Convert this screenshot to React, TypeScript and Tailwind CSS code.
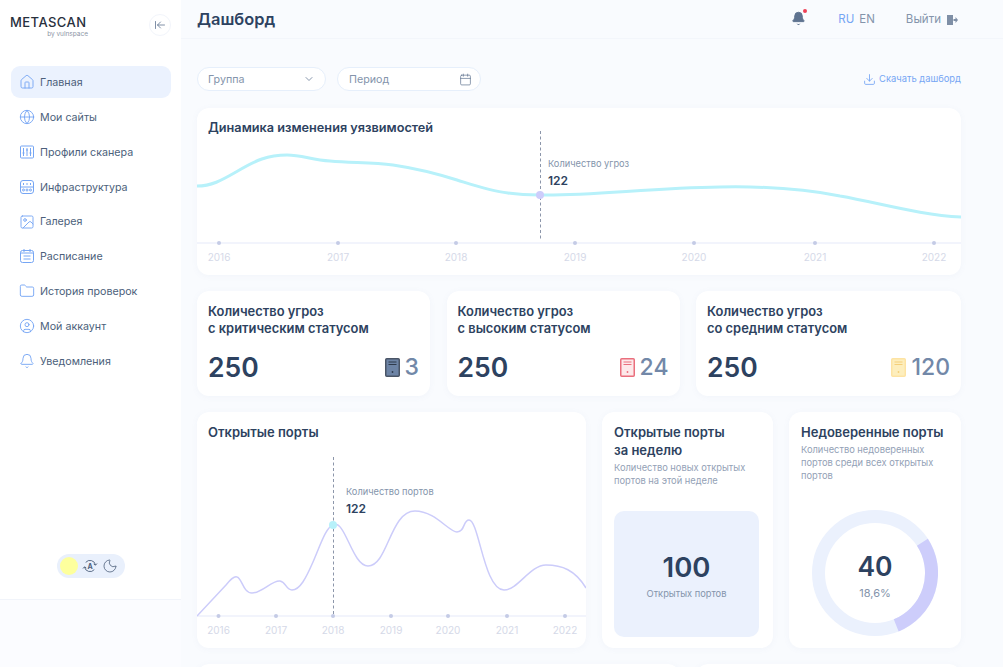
import React from 'react';
import {
  House,
  Globe,
  Image,
  Folder,
  CircleUser,
  Bell,
  Moon,
  ArrowLeftToLine,
  ChevronDown,
  Calendar,
  Download,
} from 'lucide-react';

const SlidersBox = (props: { className?: string }) => (
  <svg viewBox="0 0 16 16" fill="none" stroke="currentColor" strokeWidth="1" className={props.className}>
    <rect x="1.5" y="2" width="13" height="12" rx="1" />
    <path d="M4.5 4v8M8 4v8M11.5 4v8" />
    <path d="M3.5 9h2M7 6h2M10.5 9h2" strokeWidth="1.2" />
  </svg>
);

const InfraIcon = (props: { className?: string }) => (
  <svg viewBox="0 0 16 16" fill="none" stroke="currentColor" strokeWidth="1" className={props.className}>
    <rect x="1.5" y="1.5" width="13" height="13" rx="2.5" />
    <path d="M1.5 8h13" />
    <path d="M4.5 4v2M8 4v2M11.5 4v2" />
    <circle cx="4.5" cy="11" r="1" />
    <circle cx="8" cy="11" r="1" />
    <circle cx="11.5" cy="11" r="1" />
  </svg>
);

const ScheduleIcon = (props: { className?: string }) => (
  <svg viewBox="0 0 16 16" fill="none" stroke="currentColor" strokeWidth="1" className={props.className}>
    <rect x="1.5" y="2.5" width="13" height="12" rx="2" />
    <path d="M5 1v3M11 1v3M1.5 5h13M4.5 8h7M4.5 11h7" />
  </svg>
);

const navItems = [
  { label: 'Главная', icon: House, active: true },
  { label: 'Мои сайты', icon: Globe },
  { label: 'Профили сканера', icon: SlidersBox },
  { label: 'Инфраструктура', icon: InfraIcon },
  { label: 'Галерея', icon: Image },
  { label: 'Расписание', icon: ScheduleIcon },
  { label: 'История проверок', icon: Folder },
  { label: 'Мой аккаунт', icon: CircleUser },
  { label: 'Уведомления', icon: Bell },
];

function Sidebar() {
  return (
    <aside className="flex w-[181px] shrink-0 flex-col bg-white">
      <div className="flex h-[600px] flex-col border-b border-[#f1f4fa]">
        <div className="flex h-[66px] items-start justify-between pl-[10px] pr-[10px] pt-[14px]">
          <div className="flex w-[79px] flex-col">
            <span className="text-[13px] font-medium leading-[16px] tracking-[0.45px] text-[#27303d]">METASCAN</span>
            <span className="mt-[1px] pr-[1px] text-right text-[6.5px] leading-[7px] text-[#8b95a5]">by vulnspace</span>
          </div>
          <div className="flex h-[22px] w-[22px] items-center justify-center rounded-full border border-[#f2f5fb]">
            <ArrowLeftToLine className="h-[12px] w-[12px] text-[#5f7390]" strokeWidth={1.6} />
          </div>
        </div>
        <nav className="flex flex-col gap-[2.875px] pl-[11px] pr-[10px]">
          {navItems.map((item) => {
            const Icon = item.icon;
            return (
              <div
                key={item.label}
                className={`flex h-[32px] items-center gap-[5px] rounded-[9px] pl-[8px] text-[10.7px] text-[#4c5f7b] ${item.active ? 'bg-[#ebf2fe]' : ''}`}
              >
                <Icon className="h-[16px] w-[16px] text-[#76a6f4]" strokeWidth={1.4} />
                <span className="pt-[2px]">{item.label}</span>
              </div>
            );
          })}
        </nav>
        <div className="mt-auto mb-[21px] flex justify-center">
          <div className="flex h-[24px] w-[68px] items-center gap-[4px] rounded-full bg-[#e9f0fc] pl-[3px]">
            <span className="h-[18px] w-[18px] rounded-full bg-[#fdff9d]" />
            <svg viewBox="0 0 16 16" fill="none" stroke="#4c5f7b" strokeWidth="0.9" className="h-[16px] w-[16px]">
              <path d="M2.5 9a5.6 5.6 0 0 0 9.8 2.6M13.5 7a5.6 5.6 0 0 0-9.8-2.6" />
              <path d="M1 10.5 2.5 8.8 4.3 10M15 5.5l-1.5 1.7L11.7 6" />
              <text x="8" y="10.5" textAnchor="middle" fontSize="7" fontWeight="700" fill="#4c5f7b" stroke="none">A</text>
            </svg>
            <Moon className="h-[16px] w-[16px] text-[#4c5f7b]" strokeWidth={1.2} />
          </div>
        </div>
      </div>
      <div className="flex-1 bg-[#fbfcff]" />
    </aside>
  );
}

function Header() {
  return (
    <header className="flex h-[39px] shrink-0 items-center justify-between border-b border-[#f3f6fb] pl-[16px] pr-[45px]">
      <h1 className="text-[16.4px] font-semibold text-[#2d4260]">Дашборд</h1>
      <div className="flex items-center pt-[1px] text-[11.5px]">
        <div className="relative mr-[32px] -mt-[2px]">
          <Bell className="h-[15px] w-[15px] text-[#5f7390]" fill="#5f7390" strokeWidth={1.5} />
          <span className="absolute -right-[1px] -top-[2px] h-[4px] w-[4px] rounded-full bg-[#ef4056]" />
        </div>
        <span className="text-[#76a6f4]">RU</span>
        <span className="ml-[5px] text-[#8494ab]">EN</span>
        <span className="ml-[31px] text-[#8494ab]">Выйти</span>
        <svg viewBox="0 0 12 12" className="ml-[5px] h-[12px] w-[12px]" fill="#7f8fa6">
          <path d="M1 1h6v10H1z" />
          <path d="M7.5 5h2V3l2.5 3-2.5 3V7h-2z" />
        </svg>
      </div>
    </header>
  );
}

function Filters() {
  return (
    <div className="flex h-[24px] items-center gap-[11px]">
      <div className="flex h-[24px] w-[129px] items-center justify-between rounded-full border border-[#e6effb] bg-white px-[10px] text-[10.7px] text-[#8494ab]">
        <span className="pt-[2px]">Группа</span>
        <ChevronDown className="h-[12px] w-[12px] text-[#5f7390]" strokeWidth={1.5} />
      </div>
      <div className="flex h-[24px] w-[144px] items-center justify-between rounded-full border border-[#e6effb] bg-white pl-[11px] pr-[8px] text-[10.7px] text-[#8494ab]">
        <span className="pt-[2px]">Период</span>
        <Calendar className="h-[13px] w-[13px] text-[#5f7390]" strokeWidth={1.3} />
      </div>
      <div className="ml-auto flex items-center gap-[3px] pt-[1px] text-[9.4px] text-[#76a6f4]">
        <Download className="h-[13px] w-[13px]" strokeWidth={1.6} />
        Скачать дашборд
      </div>
    </div>
  );
}

const Card = ({ className, children }: { className?: string; children?: React.ReactNode }) => (
  <div className={`relative rounded-[12px] bg-white shadow-[0_1px_6px_rgba(120,140,190,0.06)] ${className ?? ''}`}>{children}</div>
);

const Tip = ({ className, label }: { className: string; label: string }) => (
  <div className={`absolute ${className}`}>
    <div className="text-[9.25px] leading-[12px] text-[#8494ab]">{label}</div>
    <div className="mt-[3px] text-[12px] font-semibold leading-[16px] text-[#2d4260]">122</div>
  </div>
);

const years = ['2016', '2017', '2018', '2019', '2020', '2021', '2022'];

function Axis({ xs, y, x1, x2 }: { xs: number[]; y: number; x1: number; x2: number }) {
  return (
    <g>
      <line x1={x1} x2={x2} y1={y} y2={y} stroke="#eef1fb" strokeWidth="1.5" />
      {xs.map((x, i) => (
        <g key={x}>
          <circle cx={x} cy={y} r="2" fill="#c5cbe6" />
          <text x={x} y={y + 18} textAnchor="middle" fontSize="10" fill="#d5d9e8" fontFamily="Inter, sans-serif">
            {years[i]}
          </text>
        </g>
      ))}
    </g>
  );
}

function TrendCard() {
  return (
    <Card className="h-[167px]">
      <h2 className="px-[11px] pt-[11px] text-[12.7px] font-semibold leading-[17px] text-[#2d4260]">Динамика изменения уязвимостей</h2>
      <svg viewBox="197 108 764 167" className="absolute inset-0 h-[167px] w-[764px]" fill="none">
        <Axis xs={[219, 338, 456, 575, 694, 815, 934]} y={243} x1={197} x2={961} />
        <path
          d="M197 186C212 186 222 180 236 172C256 160 268 155 287 155C302 155 312 160 330 161C352 163 372 162 393 165C420 169 438 174 457 180C476 186 490 191 508 193C522 195 530 195 540 195C590 196 650 188 720 187C770 186 810 190 840 196C880 203 920 215 961 217"
          stroke="#b7f1fa"
          strokeWidth="3"
        />
        <line x1="540.5" x2="540.5" y1="131" y2="241" stroke="#8c96aa" strokeWidth="1" strokeDasharray="3 2.5" />
        <circle cx="540" cy="195" r="4" fill="#cdcdfb" />
      </svg>
      <Tip className="left-[351px] top-[50px]" label="Количество угроз" />
    </Card>
  );
}

const ServerIcon = ({ stroke, fill, line }: { stroke: string; fill: string; line: string }) => (
  <svg viewBox="0 0 15 19" className="h-[19px] w-[15px]">
    <rect x="0.75" y="0.75" width="13.5" height="17.5" rx="1" fill={fill} stroke={stroke} strokeWidth="1.5" />
    <path d="M3.5 4h8M3.5 6.5h8" stroke={line} strokeWidth="1" />
    <circle cx="7.5" cy="14" r="0.9" fill={line} />
  </svg>
);

const threats = [
  { top: 'с критическим статусом', count: '3', stroke: '#4a5566', fill: '#6d84a6', line: '#2f3b4d' },
  { top: 'с высоким статусом', count: '24', stroke: '#ea6f7d', fill: '#fde9ea', line: '#ea6f7d' },
  { top: 'со средним статусом', count: '120', stroke: '#fde3a3', fill: '#fdeebd', line: '#f5cf7a' },
];

function ThreatCards() {
  return (
    <div className="grid grid-cols-[233px_233px_265px] gap-x-[16.5px]">
      {threats.map((t) => (
        <Card key={t.top} className="h-[105px] px-[11px] pt-[12px]">
          <div className="text-[12.9px] font-semibold leading-[17px] text-[#2d4260]">
            Количество угроз
            <br />
            {t.top}
          </div>
          <div className="mt-[12px] flex items-center justify-between">
            <span className="text-[26.5px] font-semibold leading-[36px] text-[#2d4260]">250</span>
            <span className="flex items-center gap-[5px]">
              <ServerIcon stroke={t.stroke} fill={t.fill} line={t.line} />
              <span className="text-[23px] font-medium leading-[30px] text-[#7288a8]">{t.count}</span>
            </span>
          </div>
        </Card>
      ))}
    </div>
  );
}

function PortsCard() {
  return (
    <Card className="h-[236px]">
      <h2 className="px-[11px] pt-[12px] text-[13px] font-semibold leading-[17px] text-[#2d4260]">Открытые порты</h2>
      <svg viewBox="197 412 389 236" className="absolute inset-0 h-[236px] w-[389px]" fill="none">
        <Axis xs={[218.5, 276, 333, 391, 448, 507, 565]} y={616} x1={197} x2={586} />
        <path
          d="M197 616L226 585C231 579 234 576 237 577C242 578 243 593 252 593C262 593 272 580 280 581C286 582 286 590 292 590C300 590 306 578 313 562C320 546 326 527 333 525C345 518 352 566 368 566C388 566 390 511 415 511C435 511 449 532 457 532C465 532 463 520 469 520C479 520 484 590 504 590C518 590 530 565 546 565C562 565 575 570 586 588"
          stroke="#ccccfa"
          strokeWidth="1.5"
        />
        <line x1="333.5" x2="333.5" y1="457" y2="616" stroke="#8c96aa" strokeWidth="1" strokeDasharray="3 2.5" />
        <circle cx="333" cy="525" r="4" fill="#b7f1fa" />
      </svg>
      <Tip className="left-[149px] top-[74px]" label="Количество портов" />
    </Card>
  );
}

function WeekCard() {
  return (
    <Card className="flex h-[236px] flex-col pl-[12px] pr-[11px] pt-[11px]">
      <div className="text-[13px] font-semibold leading-[18px] text-[#2d4260]">
        Открытые порты
        <br />
        за неделю
      </div>
      <p className="mt-[2px] text-[9.3px] leading-[13px] text-[#93a1b6]">
        Количество новых открытых портов на этой неделе
      </p>
      <div className="mt-auto mb-[11px] flex h-[126px] w-[145px] flex-col items-center justify-center rounded-[10px] bg-[#ebf1fd]">
        <span className="text-[27.5px] font-semibold leading-[36px] text-[#2d4260]">100</span>
        <span className="mt-[2px] text-[9.3px] leading-[13px] text-[#8494ab]">Открытых портов</span>
      </div>
    </Card>
  );
}

function UntrustedCard() {
  return (
    <Card className="flex h-[236px] flex-col pl-[12px] pr-[11px] pt-[11px]">
      <div className="text-[13px] font-semibold leading-[18px] text-[#2d4260]">Недоверенные порты</div>
      <p className="mt-[2px] text-[9.3px] leading-[13px] text-[#93a1b6]">
        Количество недоверенных портов среди всех открытых портов
      </p>
      <div className="absolute left-[23px] top-[98px] flex h-[126px] w-[126px] items-center justify-center">
        <svg viewBox="812 510 126 126" className="absolute inset-0 h-[126px] w-[126px]" fill="none">
          <circle cx="875" cy="573" r="56.5" stroke="#ebf1fd" strokeWidth="13" />
          <path d="M922.4 542.2A56.5 56.5 0 0 1 896.2 625.4" stroke="#cdcdfb" strokeWidth="13" />
        </svg>
        <div className="relative flex flex-col items-center">
          <span className="mt-[2px] text-[26.5px] font-semibold leading-[36px] text-[#2d4260]">40</span>
          <span className="mt-[2px] text-[11px] leading-[15px] text-[#8494ab]">18,6%</span>
        </div>
      </div>
    </Card>
  );
}

export default function App() {
  return (
    <div className="flex h-[667px] w-[1003px] overflow-hidden bg-[#f9fbfe] font-['Inter',sans-serif]">
      <Sidebar />
      <main className="flex min-w-0 flex-1 flex-col">
        <Header />
        <div className="flex flex-col gap-[16px] pl-[16px] pr-[42px] pt-[28px]">
          <div className="mb-[1px]">
            <Filters />
          </div>
          <TrendCard />
          <ThreatCards />
          <div className="grid grid-cols-[389px_171px_172px] gap-x-[16px]">
            <PortsCard />
            <WeekCard />
            <UntrustedCard />
          </div>
          <div className="grid grid-cols-[483px_265px] gap-x-[16px]">
            <Card className="h-[120px]" />
            <Card className="h-[120px]" />
          </div>
        </div>
      </main>
    </div>
  );
}
